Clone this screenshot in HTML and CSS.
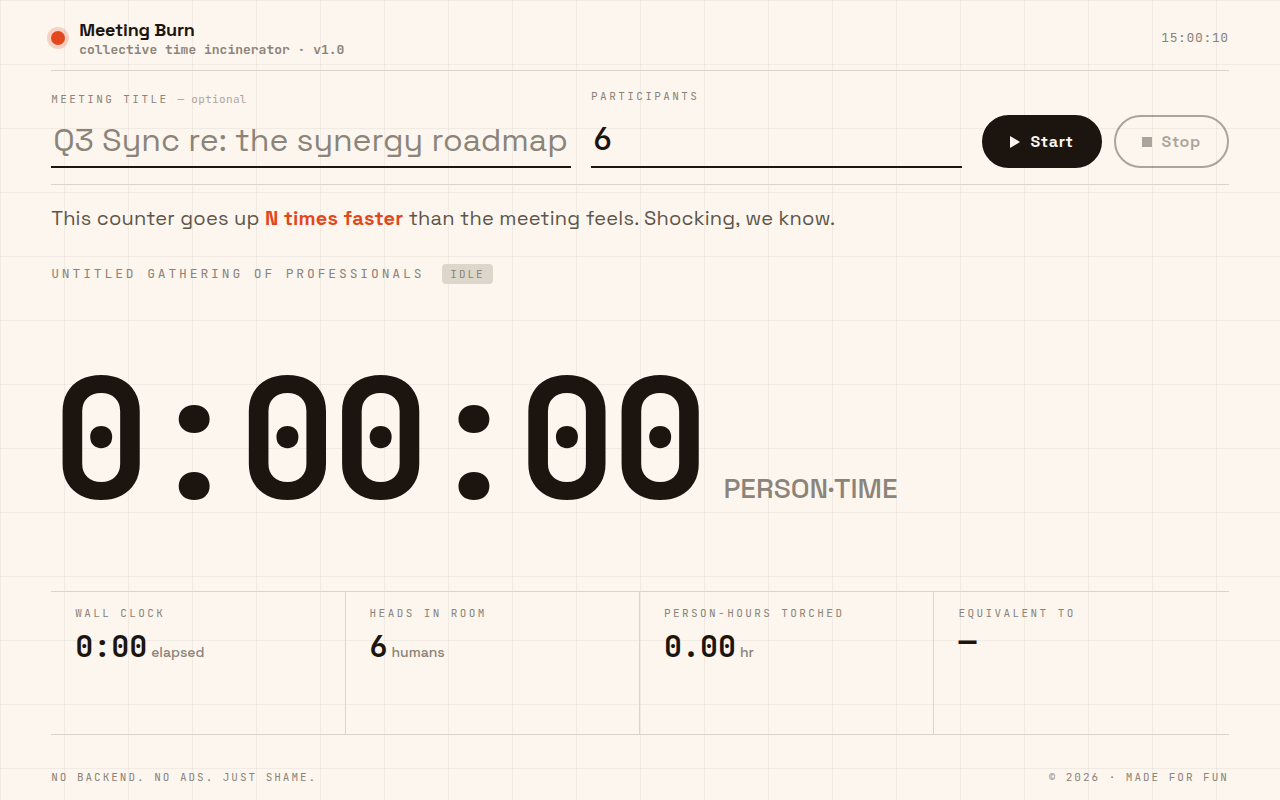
FILE: index.html
```
<!DOCTYPE html>
<html lang="en">
<head>
  <meta charset="UTF-8">
  <meta name="viewport" content="width=device-width, initial-scale=1.0">
  <title>Meeting Burn</title>
  <link rel="stylesheet" href="styles.css">
</head>
<body>
  <div class="page">
    <header class="header">
      <div class="brand">
        <span class="brand-dot"></span>
        <div>
          <h1 class="brand-name">Meeting Burn</h1>
          <p class="brand-sub">collective time incinerator · v1.0</p>
        </div>
      </div>
      <time class="clock" id="clock">15:00:10</time>
    </header>

    <form class="setup" id="setupForm">
      <div class="field">
        <label class="label" for="titleInput">Meeting title <span class="optional">— optional</span></label>
        <input class="input" type="text" id="titleInput" placeholder="Q3 Sync re: the synergy roadmap">
      </div>
      <div class="field">
        <label class="label" for="peopleInput">Participants</label>
        <input class="input input-number" type="number" id="peopleInput" min="1" value="6">
      </div>
      <div class="controls">
        <button class="btn btn-start" type="submit">
          <svg width="10" height="12" viewBox="0 0 10 12" fill="currentColor"><path d="M0 0l10 6-10 6z"/></svg>
          Start
        </button>
        <button class="btn btn-stop" type="button" disabled>
          <svg width="10" height="10" viewBox="0 0 10 10" fill="currentColor"><path d="M0 0h10v10H0z"/></svg>
          Stop
        </button>
      </div>
    </form>

    <p class="tagline">This counter goes up <strong>N times faster</strong> than the meeting feels. Shocking, we know.</p>

    <main class="main">
      <div class="meeting">
        <h2 class="meeting-name">Untitled gathering of professionals</h2>
        <span class="status">Idle</span>
      </div>
      <div class="counter">
        <span class="counter-time">0:00:00</span>
        <span class="counter-unit">PERSON·TIME</span>
      </div>
    </main>

    <section class="stats">
      <div class="stat">
        <h3 class="label">Wall clock</h3>
        <p class="value">0:00<span class="unit">elapsed</span></p>
      </div>
      <div class="stat">
        <h3 class="label">Heads in room</h3>
        <p class="value">6<span class="unit">humans</span></p>
      </div>
      <div class="stat">
        <h3 class="label">Person-hours torched</h3>
        <p class="value">0.00<span class="unit">hr</span></p>
      </div>
      <div class="stat">
        <h3 class="label">Equivalent to</h3>
        <p class="value value-text">—</p>
      </div>
    </section>

    <footer class="footer">
      <span>No backend. No ads. Just shame.</span>
      <span>© 2026 · Made for fun</span>
    </footer>
  </div>
</body>
</html>
```
FILE: styles.css
```
:root {
  --bg: #fdf6ee;
  --ink: #1c150f;
  --soft: #5c554a;
  --muted: #8a847a;
  --line: #dad5c9;
  --fire: #e2481c;
  --sans: "Space Grotesk", Inter, sans-serif;
  --mono: "JetBrains Mono", "DejaVu Sans Mono", monospace;
}

* {
  box-sizing: border-box;
  margin: 0;
  padding: 0;
}

body {
  background-color: var(--bg);
  background-image:
    linear-gradient(rgba(20, 25, 15, 0.05) 1px, transparent 1px),
    linear-gradient(90deg, rgba(20, 25, 15, 0.05) 1px, transparent 1px);
  background-size: 64px 64px;
  color: var(--ink);
  font-family: var(--sans);
}

.page {
  display: flex;
  flex-direction: column;
  min-height: 100vh;
  padding: 0 4vw;
}

/* Header */
.header {
  display: flex;
  justify-content: space-between;
  align-items: center;
  padding: 18px 0 12px;
  border-bottom: 1px solid var(--line);
}

.brand {
  display: flex;
  align-items: center;
  gap: 14px;
}

.brand-dot {
  width: 14px;
  height: 14px;
  border-radius: 50%;
  background-color: var(--fire);
  box-shadow: 0 0 0 4px rgba(226, 72, 28, 0.2);
}

.brand-name {
  font-size: 18px;
  line-height: 23px;
  font-weight: 600;
  letter-spacing: -0.01em;
}

.brand-sub {
  font-family: var(--mono);
  font-size: 13px;
  line-height: 17px;
  font-weight: 600;
  color: var(--muted);
}

.clock {
  font-family: var(--mono);
  font-size: 13px;
  line-height: 16px;
  letter-spacing: 0.05em;
  color: var(--muted);
}

/* Setup form */
.setup {
  display: grid;
  grid-template-columns: 1.4fr 1fr auto;
  align-items: end;
  gap: 20px;
  padding: 18px 0 16px;
  border-bottom: 1px solid var(--line);
}

.field {
  display: flex;
  flex-direction: column;
  gap: 6px;
  min-width: 0;
}

.label {
  font-family: var(--mono);
  font-size: 11px;
  line-height: 15px;
  font-weight: 400;
  letter-spacing: 0.22em;
  text-transform: uppercase;
  color: var(--muted);
}

.optional {
  letter-spacing: 0.03em;
  text-transform: none;
  opacity: 0.7;
}

.input {
  width: 100%;
  height: 55px;
  padding: 6px 2px;
  border: none;
  border-bottom: 2px solid var(--ink);
  border-radius: 0;
  outline: none;
  background: transparent;
  color: var(--ink);
  font-family: var(--sans);
  font-size: 32px;
}

.input::placeholder {
  color: var(--muted);
  opacity: 1;
}

.input-number {
  height: 58px;
  font-family: var(--mono);
  font-weight: 500;
  appearance: textfield;
}

.controls {
  display: flex;
  gap: 12px;
}

.btn {
  display: flex;
  align-items: center;
  gap: 10px;
  height: 53px;
  padding: 0 26px;
  border: 2px solid var(--ink);
  border-radius: 999px;
  font-family: var(--sans);
  font-size: 16px;
  font-weight: 600;
  letter-spacing: 0.04em;
  cursor: pointer;
}

.btn-start {
  background-color: var(--ink);
  color: var(--bg);
}

.btn-stop {
  background-color: transparent;
  color: var(--ink);
}

.btn:disabled {
  opacity: 0.36;
  cursor: not-allowed;
}

/* Tagline */
.tagline {
  padding: 20px 0;
  font-size: 20px;
  line-height: 26px;
  letter-spacing: 0.01em;
  color: var(--soft);
}

.tagline strong {
  font-weight: 700;
  color: var(--fire);
}

/* Counter */
.main {
  display: flex;
  flex-direction: column;
  flex: 1;
  padding-top: 13px;
}

.meeting {
  display: flex;
  align-items: center;
  gap: 18px;
}

.meeting-name {
  font-family: var(--mono);
  font-size: 13px;
  line-height: 18px;
  font-weight: 400;
  letter-spacing: 0.22em;
  text-transform: uppercase;
  color: var(--muted);
}

.status {
  padding: 0 8px;
  border-radius: 4px;
  background-color: #ddd6ca;
  font-family: var(--mono);
  font-size: 11px;
  line-height: 20px;
  letter-spacing: 0.18em;
  text-transform: uppercase;
  color: var(--muted);
}

.counter {
  display: flex;
  flex: 1;
  flex-wrap: wrap;
  align-items: baseline;
  align-content: center;
  gap: 20px;
}

.counter-time {
  font-family: var(--mono);
  font-size: 13vw;
  line-height: 150px;
  font-weight: 700;
  letter-spacing: -0.04em;
}

.counter-unit {
  font-size: 28px;
  font-weight: 500;
  color: var(--muted);
}

/* Stats */
.stats {
  display: grid;
  grid-template-columns: repeat(4, 1fr);
  min-height: 144px;
  border-top: 1px solid var(--line);
  border-bottom: 1px solid var(--line);
}

.stat {
  padding: 14px 24px;
  border-right: 1px solid var(--line);
}

.stat:last-child {
  border-right: none;
}

.value {
  margin-top: 6px;
  font-family: var(--mono);
  font-size: 30px;
  line-height: 38px;
  font-weight: 700;
  white-space: nowrap;
}

.value-text {
  line-height: 28px;
}

.unit {
  margin-left: 4px;
  font-family: var(--sans);
  font-size: 14px;
  font-weight: 500;
  color: var(--muted);
}

/* Footer */
.footer {
  display: flex;
  justify-content: space-between;
  padding: 34px 0 15px;
  font-family: var(--mono);
  font-size: 11px;
  line-height: 16px;
  letter-spacing: 0.18em;
  text-transform: uppercase;
  color: var(--muted);
}
```
